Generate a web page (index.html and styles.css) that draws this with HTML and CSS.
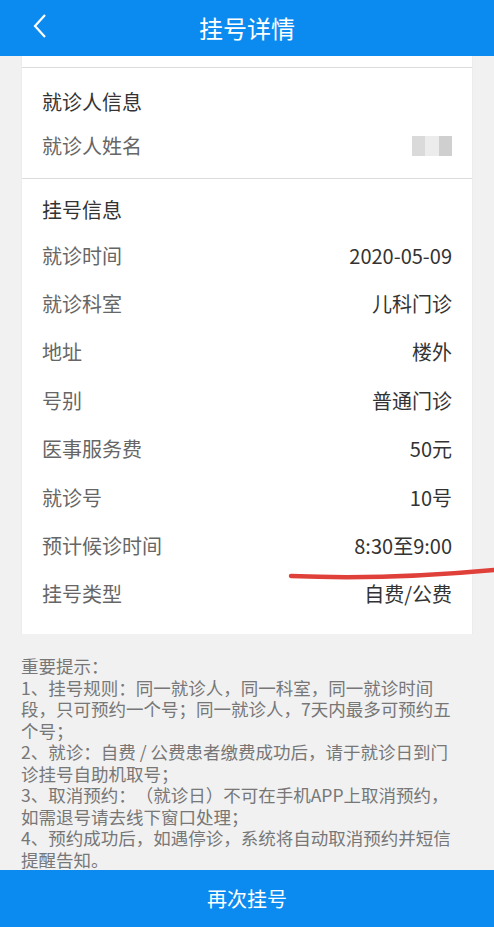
FILE: index.html
```html
<!DOCTYPE html>
<html lang="zh-CN">
<head>
  <meta charset="UTF-8">
  <meta name="viewport" content="width=device-width, initial-scale=1.0">
  <title>挂号详情</title>
  <link rel="stylesheet" href="styles.css">
</head>
<body>
  <div class="page">
    <header class="topbar">
      <span class="back">
        <svg width="16" height="26" viewBox="0 0 16 26"><path d="M13 2 L3 13 L13 24" fill="none" stroke="#fff" stroke-width="2.2"/></svg>
      </span>
      <h1>挂号详情</h1>
    </header>

    <div class="card">
      <div class="card-top"></div>
      <section class="section first">
        <div class="section-title">就诊人信息</div>
        <div class="row short">
          <span class="label">就诊人姓名</span>
          <span class="blur"><i></i><i class="b2"></i><i class="b3"></i></span>
        </div>
      </section>
      <section class="section second">
        <div class="section-title">挂号信息</div>
        <div class="row"><span class="label">就诊时间</span><span class="value">2020-05-09</span></div>
        <div class="row"><span class="label">就诊科室</span><span class="value">儿科门诊</span></div>
        <div class="row"><span class="label">地址</span><span class="value">楼外</span></div>
        <div class="row"><span class="label">号别</span><span class="value">普通门诊</span></div>
        <div class="row"><span class="label">医事服务费</span><span class="value">50元</span></div>
        <div class="row"><span class="label">就诊号</span><span class="value">10号</span></div>
        <div class="row"><span class="label">预计候诊时间</span><span class="value">8:30至9:00</span></div>
        <div class="row"><span class="label">挂号类型</span><span class="value">自费/公费</span></div>
      </section>
    </div>

    <div class="notes">
      重要提示：<br>
      1、挂号规则：同一就诊人，同一科室，同一就诊时间段，只可预约一个号；同一就诊人，7天内最多可预约五个号；<br>
      2、就诊：自费 / 公费患者缴费成功后，请于就诊日到门诊挂号自助机取号；<br>
      3、取消预约：（就诊日）不可在手机APP上取消预约，如需退号请去线下窗口处理；<br>
      4、预约成功后，如遇停诊，系统将自动取消预约并短信提醒告知。
    </div>

    <div class="footer-btn">再次挂号</div>

    <svg class="mark" width="210" height="16" viewBox="0 0 210 16">
      <path d="M3 10 C 50 12, 120 12, 206 4" fill="none" stroke="#e0403a" stroke-width="4.5" stroke-linecap="round"/>
    </svg>
  </div>
</body>
</html>
```

FILE: styles.css
```css
body {
  margin: 0;
  background: #f1f1f1;
  font-family: "Noto Sans CJK SC", "Noto Sans", sans-serif;
}
.page {
  position: relative;
  height: 927px;
  display: flex;
  flex-direction: column;
  overflow: hidden;
}
.topbar {
  height: 56px;
  background: #0b8bf0;
  display: flex;
  align-items: center;
  justify-content: center;
  position: relative;
}
.topbar h1 {
  margin: 0;
  color: #fff;
  font-size: 24px;
  font-weight: normal;
}
.back {
  position: absolute;
  left: 32px;
  top: 13px;
}
.card {
  margin: 0 21px;
  background: #fff;
  border-left: 1px solid #ececec;
  border-right: 1px solid #ececec;
}
.card-top {
  height: 11px;
  border-bottom: 1px solid #dcdcdc;
}
.section {
  padding: 0 20px;
}
.section.first {
  padding-top: 12px;
  padding-bottom: 10px;
  border-bottom: 1px solid #dcdcdc;
}
.section.second {
  padding-top: 9px;
  padding-bottom: 16px;
}
.section-title,
.row {
  height: 48.4px;
  display: flex;
  align-items: center;
  font-size: 20px;
}
.section-title {
  height: 44px;
  color: #333;
}
.second .section-title {
  height: 43px;
}
.row {
  justify-content: space-between;
}
.row.short {
  height: 44px;
}
.label {
  color: #666;
}
.value {
  color: #333;
}
.blur {
  display: flex;
  width: 40px;
  height: 20px;
  background: #e4e4e4;
}
.blur i {
  flex: 1;
  background: #dadada;
}
.blur .b2 {
  background: #ececec;
}
.blur .b3 {
  background: #cfcfcf;
}
.notes {
  margin: 21px 0 0 21px;
  width: 444px;
  font-size: 17.5px;
  line-height: 21.5px;
  color: #777;
  text-spacing-trim: space-all;
}
.footer-btn {
  margin-top: auto;
  height: 57px;
  background: #0b8bf0;
  color: #fff;
  font-size: 20px;
  display: flex;
  align-items: center;
  justify-content: center;
}
.mark {
  position: absolute;
  left: 288px;
  top: 566px;
}
```
